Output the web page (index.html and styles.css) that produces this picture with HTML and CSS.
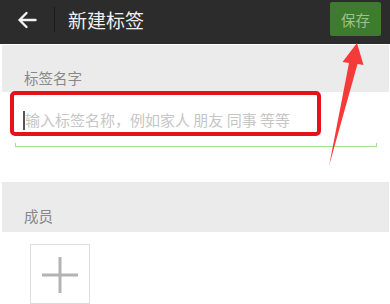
FILE: index.html
```html
<!DOCTYPE html>
<html lang="zh-CN">
<head>
  <meta charset="UTF-8" />
  <title>新建标签</title>
  <link rel="stylesheet" href="styles.css">
</head>
<body>
  <div class="page">
    <!-- Barra superior -->
    <div class="topbar">
      <div class="back">
        <svg width="20" height="18" viewBox="0 0 20 18">
          <path d="M18.5 9 H2.5 M9.5 2 L2.5 9 L9.5 16" fill="none" stroke="#f2f2f2" stroke-width="2.4" stroke-linecap="round" stroke-linejoin="round"/>
        </svg>
      </div>
      <div class="divider"></div>
      <div class="title">新建标签</div>
      <button class="save-btn">保存</button>
    </div>

    <!-- Nome da etiqueta -->
    <div class="section-head section-name">标签名字</div>
    <div class="field">
      <div class="field-text"><span class="cursor"></span>输入标签名称，例如家人 朋友 同事 等等</div>
      <div class="underline"></div>
      <div class="mark"></div>
    </div>

    <!-- Membros -->
    <div class="section-head section-members">成员</div>
    <div class="add-box">
      <svg width="60" height="60" viewBox="0 0 60 60">
        <path d="M12 31 H48 M30 13 V49" stroke="#b3b3b3" stroke-width="3"/>
      </svg>
    </div>

    <!-- Seta vermelha de anotação -->
    <svg class="arrow" width="390" height="304" viewBox="0 0 390 304">
      <polygon points="357,43 363.5,65 357.5,64 329,166 349,63 342.5,62" fill="#f53a3a"/>
    </svg>
  </div>
</body>
</html>
```

FILE: styles.css
```css
body {
  margin: 0;
  background: #ffffff;
  font-family: "Noto Sans CJK SC", "Noto Sans", sans-serif;
}

.page {
  position: relative;
  width: 390px;
  height: 304px;
  overflow: hidden;
}

.topbar {
  display: flex;
  align-items: flex-start;
  height: 44px;
  box-sizing: border-box;
  padding-top: 2px;
  background-color: #2c2c2c;
}

.back {
  width: 20px;
  height: 18px;
  margin: 9px 0 0 17px;
}

.back svg {
  display: block;
}

.divider {
  width: 1px;
  height: 25px;
  margin: 5px 0 0 17px;
  background-color: #1b1b1b;
}

.title {
  margin: 6px 0 0 13px;
  line-height: 24px;
  font-size: 19px;
  color: #f0f0f0;
}

.save-btn {
  margin-left: auto;
  margin-right: 9px;
  width: 51px;
  height: 34px;
  padding: 0;
  border: none;
  border-radius: 2px;
  background-color: #3d7b2f;
  color: #9dc28d;
  font-family: inherit;
  font-size: 14.5px;
}

.section-head {
  margin: 0 1px 0 2px;
  padding-left: 22px;
  line-height: 20px;
  font-size: 14.5px;
  color: #888888;
  background-color: #ebebeb;
}

.section-name {
  margin-top: 1px;
  padding-top: 23px;
  padding-bottom: 4px;
}

.field {
  position: relative;
  margin: 0 13px 0 15px;
  padding-top: 18px;
}

.field-text {
  display: flex;
  align-items: center;
  padding-left: 8px;
  height: 20px;
  line-height: 20px;
  font-size: 15px;
  color: #c6c6c6;
  white-space: nowrap;
}

.cursor {
  width: 2px;
  height: 19px;
  margin-right: 0;
  background-color: #555555;
}

.underline {
  height: 3px;
  margin-top: 13px;
  border: 1px solid #a9dc93;
  border-top: none;
}

.mark {
  position: absolute;
  left: -5px;
  top: -1px;
  width: 311px;
  height: 45px;
  box-sizing: border-box;
  border: 4.5px solid #e5121c;
  border-radius: 5px;
}

.section-members {
  margin-top: 35px;
  padding-top: 24px;
  padding-bottom: 6px;
}

.add-box {
  width: 60px;
  height: 60px;
  margin: 12px 0 0 30px;
  box-sizing: border-box;
  border: 1px solid #dddddd;
}

.add-box svg {
  display: block;
  margin: -1px;
}

.arrow {
  position: absolute;
  left: 0;
  top: 0;
  pointer-events: none;
}
```
